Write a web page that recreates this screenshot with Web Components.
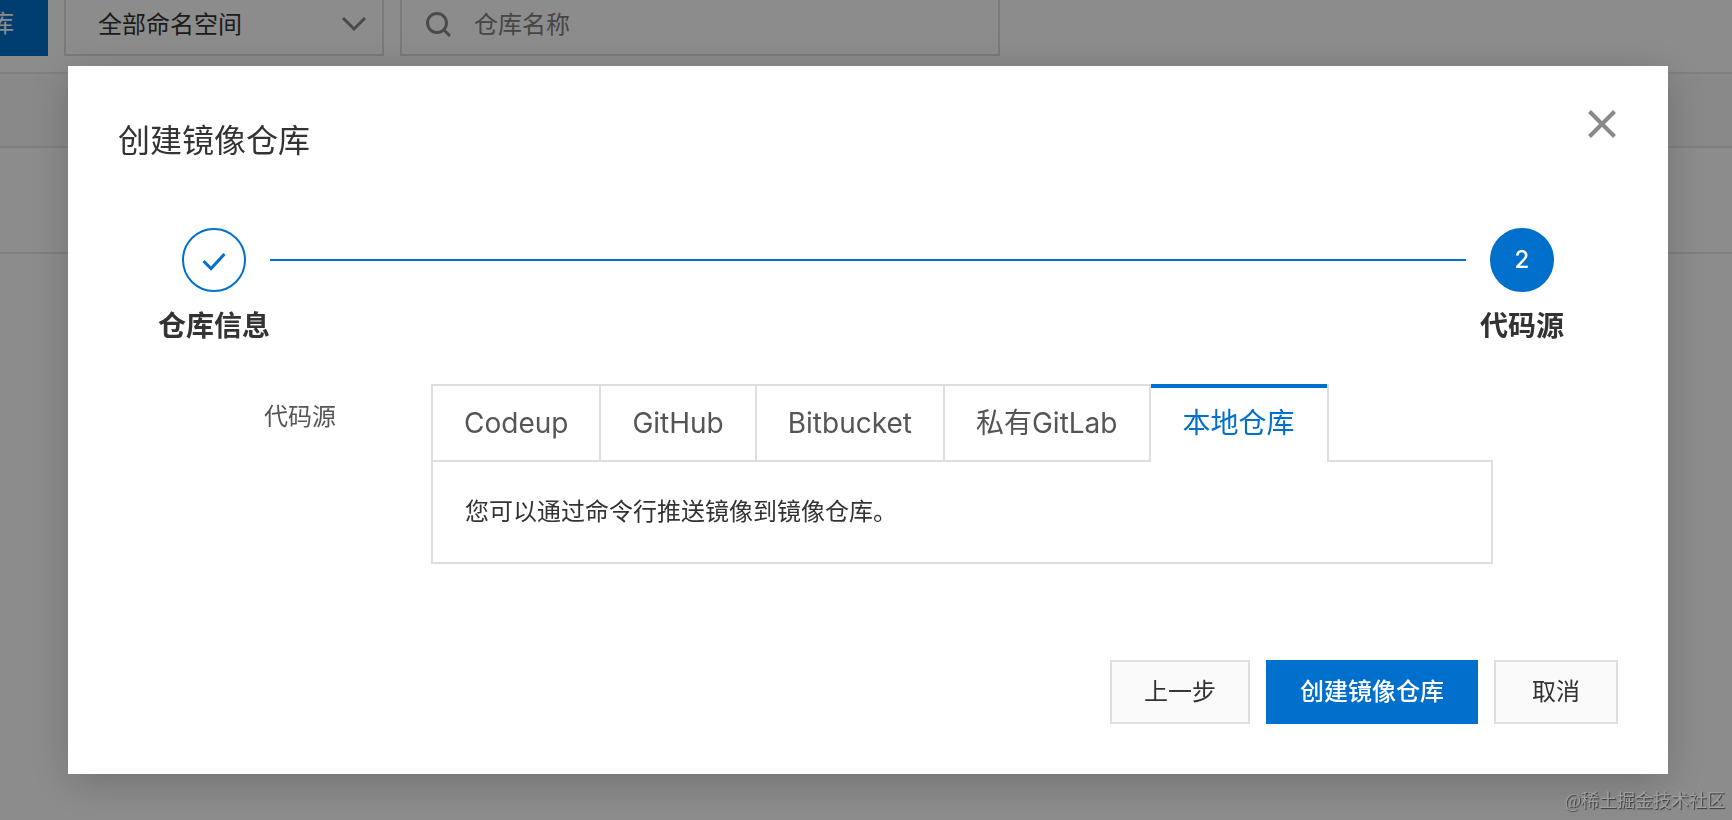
<!DOCTYPE html>
<html lang="zh-CN">
<head>
<meta charset="utf-8">
<meta name="viewport" content="width=device-width, initial-scale=1">
<title>创建镜像仓库</title>
<style>
  :root {
    --blue: #0070cc;
    --line: #dedede;
    --text: #333;
    --text-soft: #555;
  }
  body {
    margin: 0;
    height: 100vh;
    overflow: hidden;
    background: #fff;
    color: var(--text);
    font: 24px/36px Inter, "Noto Sans CJK SC", sans-serif;
  }
</style>
</head>
<body>
<repo-page></repo-page>
<modal-dialog heading="创建镜像仓库">
  <step-bar></step-bar>
  <form-field label="代码源">
    <source-tabs></source-tabs>
  </form-field>
  <ui-button slot="footer">上一步</ui-button>
  <ui-button slot="footer" primary>创建镜像仓库</ui-button>
  <ui-button slot="footer">取消</ui-button>
</modal-dialog>
<water-mark>@稀土掘金技术社区</water-mark>

<script>
const define = (name, html, setup) => customElements.define(name, class extends HTMLElement {
  constructor() {
    super();
    this.attachShadow({ mode: "open" }).innerHTML = html;
  }
  connectedCallback() {
    if (setup) setup(this, this.shadowRoot);
  }
});

define("ui-button", `
  <style>
    :host { display: block; flex: none; }
    button {
      box-sizing: border-box; height: 64px; min-width: 124px; padding: 0 32px;
      border: 2px solid var(--line); border-radius: 0; background: #fafafa;
      color: var(--text); font: inherit; cursor: pointer; white-space: nowrap;
    }
    :host([primary]) button { background: var(--blue); border-color: var(--blue); color: #fff; }
    :host([primary]:not([quiet])) button { font-weight: 500; }
  </style>
  <button type="button"><slot></slot></button>`);

define("repo-page", `
  <style>
    :host { display: block; }
    /* The page is scrolled a little, so the toolbar starts outside the window. */
    .toolbar { display: flex; gap: 16px; margin: -8px 0 16px -164px; }
    .select, .search {
      box-sizing: border-box; height: 64px; border: 2px solid var(--line);
      display: flex; align-items: center;
    }
    .select { display: grid; width: 320px; flex: none; }
    .select > * { grid-area: 1 / 1; }
    select {
      appearance: none; width: 100%; height: 100%; border: 0; padding: 2px 64px 0 32px;
      background: none; color: var(--text); font: inherit;
    }
    .select svg { justify-self: end; margin-right: 16px; pointer-events: none; }
    .search { flex: 0 1 600px; padding: 0 24px; gap: 22px; }
    input {
      flex: 1; min-width: 0; border: 0; padding: 2px 0 0; background: none; outline: 0;
      color: var(--text); font: inherit;
    }
    input::placeholder { color: #808080; opacity: 1; }
    .head { height: 72px; border: solid #e8e8e8; border-width: 2px 0; background: #fafafa; }
    .row { height: 104px; border-bottom: 2px solid #e8e8e8; }
  </style>
  <div class="toolbar">
    <ui-button primary quiet>创建镜像仓库</ui-button>
    <div class="select">
      <select aria-label="命名空间"><option>全部命名空间</option></select>
      <svg width="24" height="16" viewBox="0 0 24 16" fill="none" stroke="#888" stroke-width="3" aria-hidden="true"><path d="M1 2l11 11L23 2"/></svg>
    </div>
    <div class="search">
      <svg width="26" height="26" viewBox="0 0 26 26" fill="none" stroke="#888" stroke-width="3" aria-hidden="true"><circle cx="11" cy="12" r="9.5"/><path d="M17.5 18.5l6.5 6.5"/></svg>
      <input type="text" aria-label="仓库名称" placeholder="仓库名称">
    </div>
  </div>
  <div class="head"></div>
  <div class="row"></div>`);

define("modal-dialog", `
  <style>
    :host {
      position: fixed; inset: 0; display: flex; align-items: flex-start;
      padding: 66px 64px 46px 68px; box-sizing: border-box; background: rgba(0, 0, 0, .45);
    }
    section {
      flex: 1; min-width: 0; box-sizing: border-box; padding: 50px; background: #fff;
      box-shadow: 0 8px 40px rgba(0, 0, 0, .2);
    }
    header { display: flex; justify-content: space-between; margin-bottom: 62px; }
    h2 { margin: 0; font-size: 32px; line-height: 50px; font-weight: 400; }
    .close { display: flex; height: 32px; margin: -8px 0 0; padding: 2px; border: 0; background: none; cursor: pointer; }
    footer { display: flex; justify-content: flex-end; gap: 16px; margin-top: 96px; }
  </style>
  <section role="dialog" aria-modal="true" aria-labelledby="heading">
    <header>
      <h2 id="heading"></h2>
      <button class="close" type="button" aria-label="关闭">
        <svg width="28" height="28" viewBox="0 0 28 28" fill="none" stroke="#888" stroke-width="4" aria-hidden="true"><path d="M1.5 1.5l25 25M26.5 1.5l-25 25"/></svg>
      </button>
    </header>
    <slot></slot>
    <footer><slot name="footer"></slot></footer>
  </section>`,
  (host, root) => { root.querySelector("h2").textContent = host.getAttribute("heading"); });

define("step-bar", `
  <style>
    :host { display: block; }
    ol {
      display: grid; grid-template-columns: 64px 1fr 64px; column-gap: 24px;
      margin: 0; padding: 0 64px; list-style: none;
    }
    li { display: flex; flex-direction: column; align-items: center; gap: 14px; }
    .dot {
      display: flex; align-items: center; justify-content: center; box-sizing: border-box;
      width: 64px; height: 64px; border: 2px solid var(--blue); border-radius: 50%;
    }
    .current .dot { background: var(--blue); color: #fff; font-weight: 500; }
    .label { font-size: 28px; line-height: 40px; font-weight: 700; white-space: nowrap; }
    .track { height: 2px; margin-top: 31px; background: var(--blue); }
  </style>
  <ol>
    <li>
      <span class="dot"><svg width="24" height="22" viewBox="0 0 24 22" fill="none" stroke="#0070cc" stroke-width="3" role="img" aria-label="已完成"><path d="M1.5 12l7.5 7.5L22.5 5"/></svg></span>
      <span class="label">仓库信息</span>
    </li>
    <li class="track" role="presentation"></li>
    <li class="current" aria-current="step">
      <span class="dot">2</span>
      <span class="label">代码源</span>
    </li>
  </ol>`);

define("form-field", `
  <style>
    :host {
      display: grid; grid-template-columns: 218px 1fr; column-gap: 95px;
      margin: 38px 125px 0 0;
    }
    .label { padding-top: 15px; text-align: right; color: var(--text-soft); }
  </style>
  <span class="label"></span>
  <slot></slot>`,
  (host, root) => { root.querySelector(".label").textContent = host.getAttribute("label"); });

define("source-tabs", `
  <style>
    :host { display: block; min-width: 0; }
    .tabs { display: flex; }
    .tabs::after { content: ""; flex: 1; border-bottom: 2px solid var(--line); }
    button {
      box-sizing: border-box; height: 78px; padding: 0 31px; border: solid var(--line);
      border-width: 2px 2px 2px 0; border-radius: 0; background: none; color: var(--text-soft);
      font: inherit; font-size: 28px; line-height: 40px; white-space: nowrap; cursor: pointer;
    }
    button:first-child { border-left-width: 2px; }
    button[aria-selected="true"] {
      padding: 0 32px; border-width: 0 2px 0 0; color: var(--blue);
      background: linear-gradient(var(--blue), var(--blue)) padding-box top / 100% 4px no-repeat;
    }
    .panel { padding: 32px; border: 2px solid var(--line); border-top: 0; }
  </style>
  <div class="tabs" role="tablist" aria-label="代码源">
    <button type="button" role="tab" aria-selected="false">Codeup</button>
    <button type="button" role="tab" aria-selected="false">GitHub</button>
    <button type="button" role="tab" aria-selected="false">Bitbucket</button>
    <button type="button" role="tab" aria-selected="false">私有GitLab</button>
    <button type="button" role="tab" aria-selected="true">本地仓库</button>
  </div>
  <div class="panel" role="tabpanel">您可以通过命令行推送镜像到镜像仓库。</div>`);

define("water-mark", `
  <style>
    :host {
      position: fixed; right: 7px; bottom: 7px; font-size: 18px; line-height: 24px;
      color: #a0a0a0; text-shadow: 1px 1px 1px rgba(0, 0, 0, .6);
      font-family: "Liberation Serif", "Noto Sans CJK SC", serif;
    }
  </style>
  <slot></slot>`);
</script>
</body>
</html>
